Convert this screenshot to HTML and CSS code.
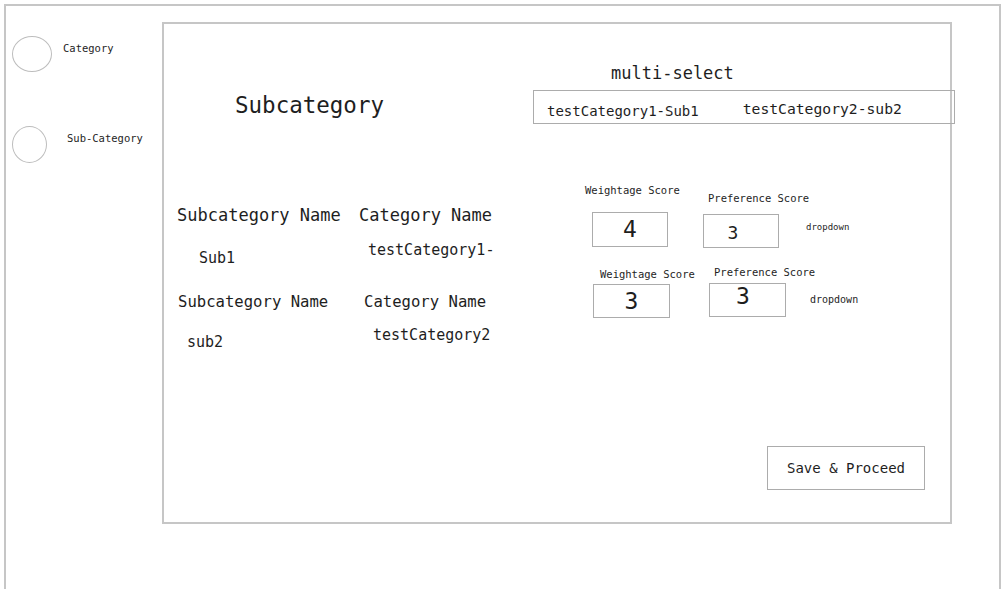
FILE: index.html
```html
<!DOCTYPE html>
<html lang="en">
<head>
<meta charset="utf-8">
<title>Subcategory</title>
<link rel="stylesheet" href="styles.css">
</head>
<body>
<div class="frame">
  <nav class="sidebar">
    <div class="nav-item nav-cat">
      <span class="nav-dot dot-cat"></span>
      <span class="nav-label">Category</span>
    </div>
    <div class="nav-item nav-sub">
      <span class="nav-dot dot-sub"></span>
      <span class="nav-label lbl-sub">Sub-Category</span>
    </div>
  </nav>

  <main class="panel">
    <div class="title-cell">
      <h1 class="title">Subcategory</h1>
    </div>

    <div class="select-cell">
      <div class="select-label">multi-select</div>
      <div class="select-box">
        <span class="chip chip-1">testCategory1-Sub1</span>
        <span class="chip chip-2">testCategory2-sub2</span>
      </div>
    </div>

    <div class="records">
      <div class="rec rec-head-a">
        <span class="cell">Subcategory Name</span>
        <span class="cell">Category Name</span>
      </div>
      <div class="rec rec-val-a">
        <span class="cell">Sub1</span>
        <span class="cell">testCategory1-</span>
      </div>
      <div class="rec rec-head-b">
        <span class="cell">Subcategory Name</span>
        <span class="cell">Category Name</span>
      </div>
      <div class="rec rec-val-b">
        <span class="cell">sub2</span>
        <span class="cell">testCategory2</span>
      </div>
    </div>

    <div class="scores">
      <div class="score-row score-row-1">
        <div class="field field-w">
          <span class="field-label">Weightage Score</span>
          <span class="score-box num-lg">4</span>
        </div>
        <div class="field field-p">
          <span class="field-label">Preference Score</span>
          <span class="score-box num-sm">3</span>
        </div>
        <span class="dropdown">dropdown</span>
      </div>
      <div class="score-row score-row-2">
        <div class="field field-w">
          <span class="field-label">Weightage Score</span>
          <span class="score-box num-lg">3</span>
        </div>
        <div class="field field-p">
          <span class="field-label">Preference Score</span>
          <span class="score-box num-lg num-up">3</span>
        </div>
        <span class="dropdown">dropdown</span>
      </div>
    </div>

    <div class="actions">
      <button class="btn-save" type="button">Save &amp; Proceed</button>
    </div>
  </main>
</div>
</body>
</html>
```

FILE: styles.css
```css
* { box-sizing: border-box; }

html, body {
  margin: 0;
  padding: 0;
  background: #ffffff;
  overflow: hidden;
}

body {
  font-family: "DejaVu Sans Mono", "Liberation Mono", monospace;
  color: #1e1e1e;
  width: 1003px;
  height: 589px;
}

.frame {
  margin: 4px 2px 0 4px;
  height: 585px;
  border: 2px solid #c6c6c6;
  border-bottom: none;
  display: flex;
  align-items: flex-start;
}

/* ---------- sidebar ---------- */
.sidebar {
  width: 156px;
  flex: none;
  display: flex;
  flex-direction: column;
  padding-left: 6px;
}

.nav-item {
  display: flex;
  align-items: flex-start;
}

.nav-cat { margin-top: 30px; }
.nav-sub { margin-top: 54px; }

.nav-dot {
  display: block;
  flex: none;
  border: 1px solid #bdbdbd;
  border-radius: 50%;
}

.dot-cat { width: 40px; height: 36px; }
.dot-sub { width: 35px; height: 37px; }

.nav-label {
  font-size: 10.5px;
  line-height: 14px;
  margin-top: 5px;
  margin-left: 11px;
  white-space: nowrap;
}

.lbl-sub { margin-left: 20px; }

/* ---------- main panel ---------- */
.panel {
  width: 790px;
  height: 502px;
  flex: none;
  margin-top: 16px;
  border: 2px solid #c6c6c6;
  display: grid;
  grid-template-columns: 369px minmax(0, 1fr);
  grid-template-rows: auto auto 1fr;
}

.title-cell {
  padding: 67px 0 0 71px;
}

.title {
  margin: 0;
  font-size: 22.5px;
  line-height: 28px;
  font-weight: normal;
  white-space: nowrap;
}

.select-cell {
  padding-top: 39px;
  min-width: 0;
}

.select-label {
  margin-left: 78px;
  font-size: 17px;
  line-height: 20px;
}

.select-box {
  margin-top: 7px;
  width: 422px;
  height: 34px;
  border: 1px solid #acacac;
  display: flex;
  align-items: flex-start;
  white-space: nowrap;
}

.chip { line-height: 18px; }
.chip-1 { font-size: 14px; margin: 11px 0 0 13px; }
.chip-2 { font-size: 14.7px; margin: 9px 0 0 44px; }

/* ---------- records ---------- */
.records {
  padding-top: 80px;
  white-space: nowrap;
}

.rec {
  display: flex;
  align-items: flex-start;
}

.rec .cell:first-child { flex: none; }

.rec-head-a { font-size: 17px; line-height: 22px; }
.rec-head-a .cell:first-child { margin-left: 13px; width: 182px; }

.rec-val-a { font-size: 15px; line-height: 20px; margin-top: 14px; }
.rec-val-a .cell:first-child { margin: 8px 0 0 35px; width: 169px; }

.rec-head-b { font-size: 15.6px; line-height: 20px; margin-top: 24px; }
.rec-head-b .cell:first-child { margin-left: 14px; width: 186px; }

.rec-val-b { font-size: 15px; line-height: 20px; margin-top: 13px; }
.rec-val-b .cell:first-child { margin: 7px 0 0 23px; width: 186px; }

/* ---------- scores ---------- */
.scores {
  white-space: nowrap;
  min-width: 0;
}

.score-row {
  display: flex;
  align-items: flex-start;
}

.field {
  flex: none;
  display: flex;
  flex-direction: column;
  align-items: flex-start;
}

.field-label {
  font-size: 10.5px;
  line-height: 14px;
}

.score-box {
  display: flex;
  align-items: center;
  justify-content: center;
  border: 1px solid #acacac;
  line-height: 1;
}

.num-lg { font-size: 23px; }
.num-sm { font-size: 18px; padding: 3px 16px 0 0; }
.num-up { padding: 0 9px 7px 0; }

.dropdown {
  flex: none;
  font-size: 9px;
  line-height: 12px;
}

/* row 1 */
.score-row-1 { margin-top: 59px; }
.score-row-1 .field-w { width: 83px; margin-left: 52px; }
.score-row-1 .field-w .score-box { margin: 15px 0 0 7px; width: 76px; height: 35px; }
.score-row-1 .field-p { width: 76px; margin-left: 35px; }
.score-row-1 .field-p .field-label { margin: 8px 0 0 5px; }
.score-row-1 .field-p .score-box { margin-top: 9px; width: 76px; height: 34px; }
.score-row-1 .dropdown { margin: 38px 0 0 27px; }

/* row 2 */
.score-row-2 { margin-top: 17px; }
.score-row-2 .field-w { width: 77px; margin-left: 60px; }
.score-row-2 .field-w .field-label { margin: 2px 0 0 7px; }
.score-row-2 .field-w .score-box { margin-top: 3px; width: 77px; height: 34px; }
.score-row-2 .field-p { width: 77px; margin-left: 39px; }
.score-row-2 .field-p .field-label { margin-left: 5px; }
.score-row-2 .field-p .score-box { margin-top: 4px; width: 77px; height: 34px; }
.score-row-2 .dropdown { font-size: 10px; line-height: 13px; margin: 28px 0 0 24px; }

/* ---------- actions ---------- */
.actions {
  grid-column: 1 / -1;
  display: flex;
  justify-content: flex-end;
  align-items: flex-end;
  padding: 0 25px 32px 0;
}

.btn-save {
  width: 158px;
  height: 44px;
  padding: 0;
  background: #ffffff;
  border: 1px solid #acacac;
  border-radius: 0;
  font-family: inherit;
  font-size: 14px;
  color: #1e1e1e;
}
```
